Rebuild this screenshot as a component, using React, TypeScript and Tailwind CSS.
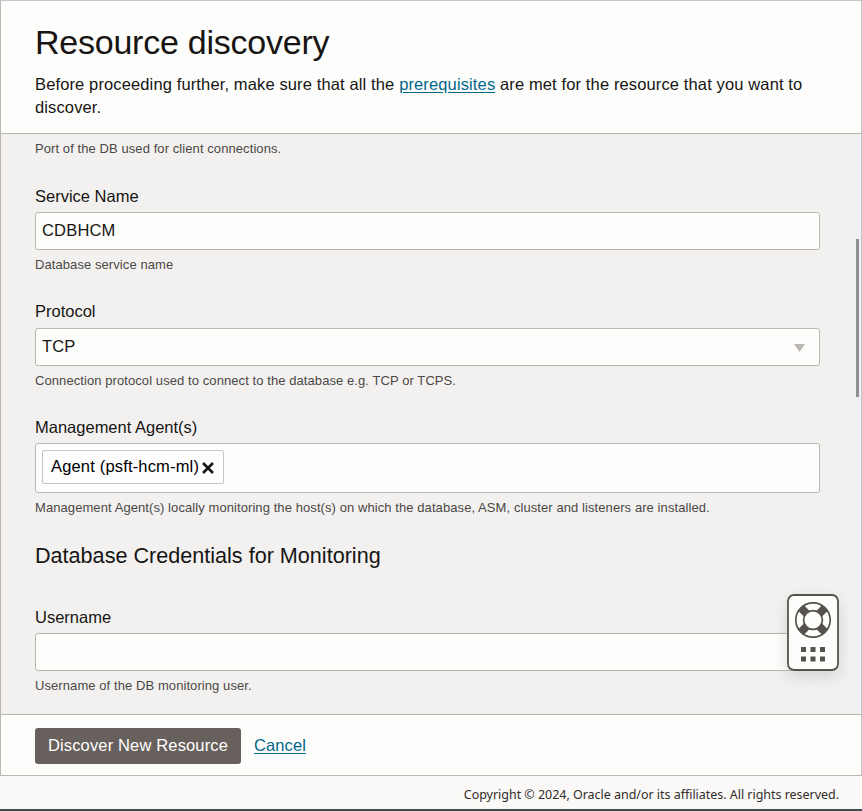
import React from "react";

function Hint({ children, className = "" }: { children: React.ReactNode; className?: string }) {
  return (
    <p className={`whitespace-nowrap text-[13px] leading-4 tracking-[0.08px] text-[#4b4845] ${className}`}>{children}</p>
  );
}

function Label({ children, className = "" }: { children: React.ReactNode; className?: string }) {
  return <label className={`block pb-[2px] text-[16.5px] leading-[18px] ${className}`}>{children}</label>;
}

function HelpWidget() {
  return (
    <button className="absolute left-[787px] top-[594px] block h-[77px] w-[52px] rounded-[7px] bg-[#fdfdfb] shadow-[0_6px_16px_rgba(0,0,0,0.12)]">
      <svg width="52" height="77" viewBox="0 0 52 77" fill="none">
        <rect x="1" y="1" width="50" height="75" rx="6" stroke="#55514e" strokeWidth="1.8" />
        <g stroke="#55514e" strokeWidth="8">
          <path d="M14.2 14.2l5.8 5.8M37.8 14.2l-5.8 5.8M14.2 37.8l5.8-5.8M37.8 37.8l-5.8-5.8" />
        </g>
        <circle cx="26" cy="26" r="17.2" stroke="#55514e" strokeWidth="1.7" />
        <circle cx="26" cy="26" r="9.4" fill="#fdfdfb" stroke="#55514e" strokeWidth="1.7" />
        <g fill="#55514e">
          <rect x="14" y="53" width="5" height="5" />
          <rect x="23.5" y="53" width="5" height="5" />
          <rect x="33" y="53" width="5" height="5" />
          <rect x="14" y="62.5" width="5" height="5" />
          <rect x="23.5" y="62.5" width="5" height="5" />
          <rect x="33" y="62.5" width="5" height="5" />
        </g>
      </svg>
    </button>
  );
}

export default function App() {
  return (
    <div className="relative flex h-[811px] w-[862px] flex-col overflow-hidden bg-[#fbf9f8] font-['Liberation_Sans',Arial,sans-serif] text-[#161513]">
      <section className="flex h-[776px] flex-col border border-[#bcb6b1] border-r-[#c7c7cb] border-t-[#c7c7cb]">
        <header className="h-[133px] shrink-0 border-b border-[#bcb6b1] bg-[#fdfdfb] pl-[34px] pt-5">
          <h1 className="whitespace-nowrap text-[34px] leading-[42px] tracking-[-0.24px]">Resource discovery</h1>
          <p className="mt-[10px] whitespace-nowrap text-[16.5px] leading-[23px] tracking-[0.128px]">
            Before proceeding further, make sure that all the{" "}
            <a className="text-[#00688c] underline underline-offset-2">prerequisites</a> are met for the resource that you want to
            <br />
            discover.
          </p>
        </header>
        <div className="flex h-[580px] shrink-0 bg-[#f3f1f0]">
          <form className="w-[819px] pl-[34px] pt-[7px]">
            <Hint>Port of the DB used for client connections.</Hint>
            <Label className="mt-[30px]">Service Name</Label>
            <div className="mt-[5px] flex h-[38px] items-center rounded-[3px] border border-[#bcb6b1] bg-[#fdfdfb] px-[6px] pb-[2px] text-[16.5px] leading-6 tracking-[0.18px]">
              CDBHCM
            </div>
            <Hint className="mt-[7px]">Database service name</Hint>
            <Label className="mt-[29px]">Protocol</Label>
            <div className="mt-[6px] flex h-[38px] items-center justify-between rounded-[3px] border border-[#bcb6b1] bg-[#fdfdfb] pl-[6px] pr-[14px]">
              <span className="pb-[2px] text-[16.5px] leading-6 tracking-[0.1px]">TCP</span>
              <svg width="11" height="8" viewBox="0 0 11 8" className="mt-[2px]">
                <path d="M0 0h11L5.5 8z" fill="#bcb6b1" />
              </svg>
            </div>
            <Hint className="mt-[7px]">Connection protocol used to connect to the database e.g. TCP or TCPS.</Hint>
            <Label className="mt-[29px]">Management Agent(s)</Label>
            <div className="mt-[5px] flex h-[50px] items-start rounded-[3px] border border-[#bcb6b1] bg-[#fdfdfd] p-[6px]">
              <span className="flex h-[34px] w-[182px] items-center rounded-[2px] border border-[#c5c5c8] pl-2 text-black">
                <span className="whitespace-nowrap pb-[3px] text-[16.5px] leading-6 tracking-[0.17px]">Agent (psft-hcm-ml)</span>
                <svg width="12" height="12" viewBox="0 0 12 12" className="ml-[3px] mt-[2px] shrink-0">
                  <path d="M1 1l10 10M11 1L1 11" stroke="#161513" strokeWidth="2.6" />
                </svg>
              </span>
            </div>
            <Hint className="mt-[7px]">
              Management Agent(s) locally monitoring the host(s) on which the database, ASM, cluster and listeners are installed.
            </Hint>
            <h2 className="mt-[26px] whitespace-nowrap text-[21.6px] leading-7">Database Credentials for Monitoring</h2>
            <Label className="mt-[38px]">Username</Label>
            <div className="mt-[5px] h-[38px] rounded-[3px] border border-[#bcb6b1] bg-[#fdfdfb]" />
            <Hint className="mt-[7px]">Username of the DB monitoring user.</Hint>
          </form>
          <div className="ml-auto w-[7px] bg-[#eef0f4] pl-[2px] pt-[105px]">
            <div className="h-[158px] w-[3px] bg-[#8e8f93]" />
          </div>
        </div>
        <footer className="flex flex-1 items-center gap-[13px] border-t border-[#bcb6b1] bg-[#fdfdfb] pl-[34px] pt-[2px] text-[16.5px] leading-6">
          <button className="h-9 w-[206px] whitespace-nowrap rounded-[3px] bg-[#68605c] pb-[3px] tracking-[0.15px] text-white">Discover New Resource</button>
          <a className="pb-[3px] tracking-[0.1px] text-[#00688c] underline underline-offset-2">Cancel</a>
        </footer>
      </section>
      <div className="flex h-[33px] items-center justify-end pr-[23px] pt-[5px] font-['Noto_Sans','Open_Sans',sans-serif] text-[12.5px] tracking-[-0.03px] text-[#312d2a]">
        <span className="whitespace-nowrap">Copyright © 2024, Oracle and/or its affiliates. All rights reserved.</span>
      </div>
      <div className="h-[2px] bg-[#3c4f4e]" />
      <HelpWidget />
    </div>
  );
}
